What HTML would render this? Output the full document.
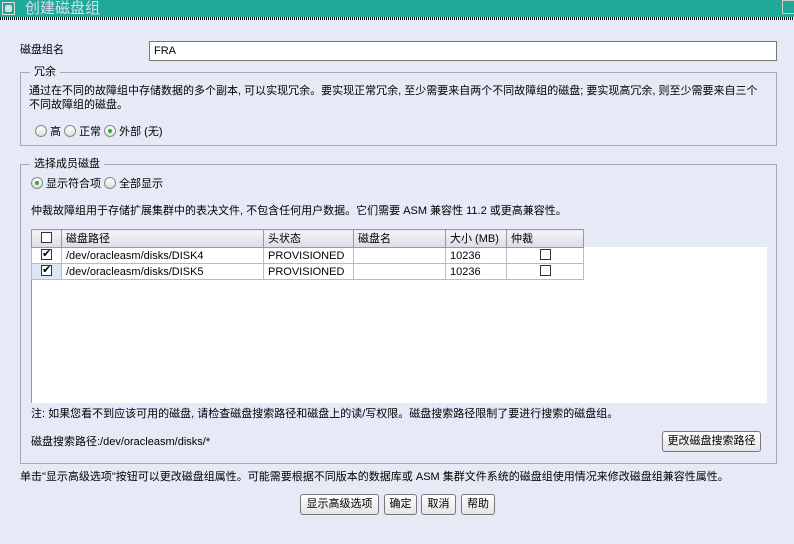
<!DOCTYPE html>
<html><head><meta charset="utf-8"><style>
*{box-sizing:border-box}
body{margin:0;width:794px;height:544px;background:#e6e9f6;font-family:"Liberation Sans","Noto Sans CJK SC",sans-serif;font-size:11px;color:#000;position:relative;overflow:hidden}
.a{position:absolute;white-space:nowrap;line-height:14px}
.tb{position:absolute;left:0;top:0;width:794px;height:18px;background:#20a898}
.dots{position:absolute;left:0;top:17px;width:794px;height:3px;background:repeating-linear-gradient(90deg,#000 0 1px,#fff 1px 2px)}
.fs{position:absolute;border:1px solid #a8a8b0}
.lg{position:absolute;background:#e6e9f6;padding:0 4px;line-height:14px}
.rad{display:inline-block;width:12px;height:12px;border:1px solid #888;border-radius:50%;background:linear-gradient(#fff,#e0e0d8);vertical-align:-2px;margin-right:3px;position:relative}
.rad.on::after{content:"";position:absolute;left:3px;top:3px;width:4px;height:4px;border-radius:50%;background:#3a3}
.btn{position:absolute;height:21px;border:1px solid #777;border-radius:3px;background:linear-gradient(#fff,#e4e4ea);text-align:center;line-height:19px}
table{border-collapse:collapse;position:absolute;left:31px;top:229px;font-size:11px;table-layout:fixed;width:552px}
td{border:1px solid #bbb;height:16px;padding:0 4px;line-height:14px;white-space:nowrap;background:#fff;overflow:hidden}
th{border:1px solid #999;height:18px;padding:0 4px;text-align:left;font-weight:normal;background:linear-gradient(#f4f4f8,#dcdce4);line-height:14px;white-space:nowrap;overflow:hidden}
.cb{display:inline-block;width:11px;height:11px;border:1px solid #333;background:#fff;position:relative;vertical-align:-1px}
.cb.on::after{content:"✔";position:absolute;left:0;top:-3px;font-size:11px}
</style></head><body>
<div class="tb"></div>
<div style="position:absolute;left:2px;top:2px;width:13px;height:13px;border:1px solid #ddd;"><div style="margin:2px;width:7px;height:7px;background:#ddd;border-radius:2px"></div></div>
<div class="a" style="left:25px;top:0;color:#dde;font-size:15px;line-height:17px">创建磁盘组</div>
<div style="position:absolute;left:782px;top:0;width:12px;height:14px;border:1px solid #ccc;border-right:none"></div>
<div class="dots"></div>

<div class="a" style="left:20px;top:43px">磁盘组名</div>
<div style="position:absolute;left:149px;top:41px;width:628px;height:20px;background:#fff;border:1px solid #777;padding:2px 4px;line-height:14px">FRA</div>

<div class="fs" style="left:20px;top:72px;width:757px;height:74px"></div>
<div class="lg" style="left:30px;top:65px">冗余</div>
<div class="a" style="left:29px;top:84px">通过在不同的故障组中存储数据的多个副本, 可以实现冗余。要实现正常冗余, 至少需要来自两个不同故障组的磁盘; 要实现高冗余, 则至少需要来自三个</div>
<div class="a" style="left:29px;top:98px">不同故障组的磁盘。</div>
<div class="a" style="left:35px;top:125px"><span class="rad"></span>高 <span class="rad"></span>正常 <span class="rad on"></span>外部 (无)</div>

<div class="fs" style="left:20px;top:164px;width:757px;height:300px"></div>
<div class="lg" style="left:30px;top:157px">选择成员磁盘</div>
<div class="a" style="left:31px;top:177px"><span class="rad on"></span>显示符合项 <span class="rad"></span>全部显示</div>
<div class="a" style="left:31px;top:204px">仲裁故障组用于存储扩展集群中的表决文件, 不包含任何用户数据。它们需要 ASM 兼容性 11.2 或更高兼容性。</div>

<div style="position:absolute;left:31px;top:229px;width:736px;height:174px;background:#fff;border-left:1px solid #999;border-top:1px solid #999"></div>
<div style="position:absolute;left:582px;top:229px;width:185px;height:18px;background:#e6e9f6"></div>
<table>
<colgroup><col style="width:30px"><col style="width:202px"><col style="width:90px"><col style="width:92px"><col style="width:61px"><col style="width:77px"></colgroup>
<tr><th style="text-align:center"><span class="cb"></span></th><th>磁盘路径</th><th>头状态</th><th>磁盘名</th><th>大小 (MB)</th><th>仲裁</th></tr>
<tr><td style="text-align:center"><span class="cb on"></span></td><td>/dev/oracleasm/disks/DISK4</td><td>PROVISIONED</td><td></td><td>10236</td><td style="text-align:center"><span class="cb"></span></td></tr>
<tr><td style="text-align:center;background:#dde6f6"><span class="cb on"></span></td><td>/dev/oracleasm/disks/DISK5</td><td>PROVISIONED</td><td></td><td>10236</td><td style="text-align:center"><span class="cb"></span></td></tr>
</table>

<div class="a" style="left:31px;top:407px">注: 如果您看不到应该可用的磁盘, 请检查磁盘搜索路径和磁盘上的读/写权限。磁盘搜索路径限制了要进行搜索的磁盘组。</div>
<div class="a" style="left:31px;top:435px">磁盘搜索路径:/dev/oracleasm/disks/*</div>
<div class="btn" style="left:662px;top:431px;width:99px">更改磁盘搜索路径</div>

<div class="a" style="left:20px;top:470px">单击"显示高级选项"按钮可以更改磁盘组属性。可能需要根据不同版本的数据库或 ASM 集群文件系统的磁盘组使用情况来修改磁盘组兼容性属性。</div>
<div class="btn" style="left:300px;top:494px;width:79px">显示高级选项</div>
<div class="btn" style="left:384px;top:494px;width:33px">确定</div>
<div class="btn" style="left:421px;top:494px;width:35px">取消</div>
<div class="btn" style="left:461px;top:494px;width:34px">帮助</div>
</body></html>
